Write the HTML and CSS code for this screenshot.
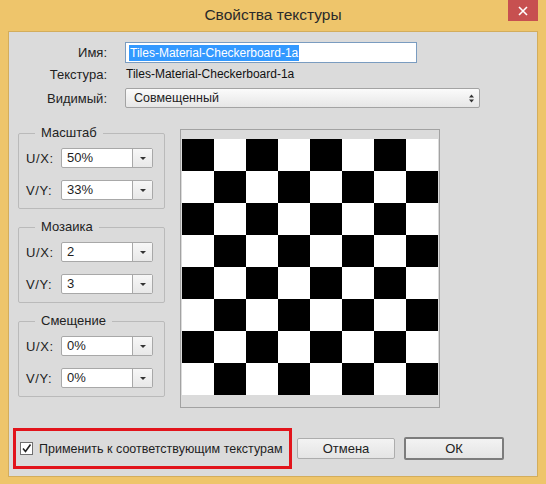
FILE: index.html
```html
<!DOCTYPE html>
<html lang="ru">
<head>
<meta charset="utf-8">
<title>Свойства текстуры</title>
<link rel="stylesheet" href="styles.css">
</head>
<body>
<div class="window">
  <div class="titlebar">
    <span class="title">Свойства текстуры</span>
    <div class="close"><svg width="10" height="10" viewBox="0 0 10 10"><path d="M1 1L9 9M9 1L1 9" stroke="#fff" stroke-width="1.6"/></svg></div>
  </div>
  <div class="client">
    <div class="props">
      <div class="prow r-name">
        <span class="plabel">Имя:</span>
        <div class="name-input"><span class="sel">Tiles-Material-Checkerboard-1a</span></div>
      </div>
      <div class="prow r-tex">
        <span class="plabel">Текстура:</span>
        <span class="pval">Tiles-Material-Checkerboard-1a</span>
      </div>
      <div class="prow r-vis">
        <span class="plabel">Видимый:</span>
        <div class="select"><span>Совмещенный</span>
          <svg width="5" height="9" viewBox="0 0 5 9"><path d="M0 3.5L2.5 0.5L5 3.5Z M0 5.5L2.5 8.5L5 5.5Z" fill="#333"/></svg>
        </div>
      </div>
    </div>
    <div class="middle">
      <div class="groups">
        <fieldset class="group">
          <legend>Масштаб</legend>
          <div class="crow"><span class="clabel">U/X:</span><div class="combo"><span class="cval">50%</span><span class="cbtn"><i></i></span></div></div>
          <div class="crow"><span class="clabel">V/Y:</span><div class="combo"><span class="cval">33%</span><span class="cbtn"><i></i></span></div></div>
        </fieldset>
        <fieldset class="group">
          <legend>Мозаика</legend>
          <div class="crow"><span class="clabel">U/X:</span><div class="combo"><span class="cval">2</span><span class="cbtn"><i></i></span></div></div>
          <div class="crow"><span class="clabel">V/Y:</span><div class="combo"><span class="cval">3</span><span class="cbtn"><i></i></span></div></div>
        </fieldset>
        <fieldset class="group">
          <legend>Смещение</legend>
          <div class="crow"><span class="clabel">U/X:</span><div class="combo"><span class="cval">0%</span><span class="cbtn"><i></i></span></div></div>
          <div class="crow"><span class="clabel">V/Y:</span><div class="combo"><span class="cval">0%</span><span class="cbtn"><i></i></span></div></div>
        </fieldset>
      </div>
      <div class="preview"><div class="board"></div></div>
    </div>
    <div class="footer">
      <div class="highlight">
        <span class="checkbox"><svg width="11" height="11" viewBox="0 0 11 11"><path d="M2 5.5L4.5 8.5L9.5 1.5" fill="none" stroke="#222" stroke-width="1.6"/></svg></span>
        <span class="cblabel">Применить к соответствующим текстурам</span>
      </div>
      <div class="btn cancel">Отмена</div>
      <div class="btn ok">ОК</div>
    </div>
  </div>
</div>
</body>
</html>
```

FILE: styles.css
```css
* { box-sizing: border-box; }
html, body { margin: 0; padding: 0; }
body {
  background: #eec56b;
  font-family: "Liberation Sans", Arial, sans-serif;
  font-size: 13px;
  color: #1e1e1e;
  white-space: nowrap;
}
.window {
  width: 546px;
  height: 484px;
  background: #eec56b;
  padding: 0 8px 7px 8px;
  display: flex;
  flex-direction: column;
}
.titlebar {
  position: relative;
  height: 31px;
  display: flex;
  align-items: center;
  justify-content: center;
}
.title {
  font-size: 15.5px;
  color: #2a2a2a;
  margin-top: -1px;
}
.close {
  position: absolute;
  right: 0;
  top: 0;
  width: 30px;
  height: 21px;
  background: #c75050;
  display: flex;
  align-items: center;
  justify-content: center;
}
.client {
  height: 446px;
  background: #dbdbdb;
  border: 1px solid #d3ad5c;
  display: flex;
  flex-direction: column;
}
.props {
  padding-top: 10px;
  display: flex;
  flex-direction: column;
}
.prow {
  display: flex;
  align-items: center;
}
.plabel {
  width: 98px;
  text-align: right;
  margin-right: 18px;
  color: #222;
}
.r-name { height: 21px; }
.r-tex { height: 22px; }
.r-vis { height: 20px; margin-top: 3px; }
.name-input {
  width: 292px;
  height: 21px;
  background: #fff;
  border: 1px solid #7a9cc0;
  display: flex;
  align-items: center;
  padding-left: 3px;
  font-size: 12px;
}
.sel {
  background: #3399ff;
  color: #fff;
  line-height: 16px;
  padding: 0 1px;
}
.pval { font-size: 12px; color: #111; padding-left: 1px; }
.select {
  width: 355px;
  height: 20px;
  border: 1px solid #a3a3a3;
  border-radius: 2px;
  background: linear-gradient(#fbfbfb, #e6e6e6);
  display: flex;
  align-items: center;
  justify-content: space-between;
  padding: 0 5px 0 8px;
  font-size: 12.5px;
}
.middle {
  margin-top: 17px;
  display: flex;
  align-items: flex-start;
}
.groups {
  margin-left: 9px;
  width: 147px;
  display: flex;
  flex-direction: column;
  gap: 10px;
}
.group {
  margin: 0;
  padding: 7px 10px 8px 7px;
  border: 1px solid #bababa;
  border-radius: 2px;
  display: flex;
  flex-direction: column;
  gap: 12px;
  min-width: 0;
}
.group legend {
  margin-left: 9px;
  padding: 0 6px;
  line-height: 16px;
  font-size: 13px;
  color: #222;
}
.crow {
  display: flex;
  align-items: center;
  height: 20px;
}
.clabel {
  width: 35px;
  letter-spacing: 0.6px;
  color: #222;
}
.combo {
  width: 92px;
  height: 20px;
  background: #fff;
  border: 1px solid #a8a8a8;
  border-radius: 2px;
  display: flex;
}
.cval {
  flex: 1;
  padding-left: 5px;
  line-height: 18px;
}
.cbtn {
  width: 20px;
  border-left: 1px solid #a8a8a8;
  background: linear-gradient(#f7f7f7, #e8e8e8);
  display: flex;
  align-items: center;
  justify-content: center;
}
.cbtn i {
  width: 0;
  height: 0;
  border-left: 3px solid transparent;
  border-right: 3px solid transparent;
  border-top: 3px solid #333;
}
.preview {
  margin-left: 15px;
  margin-top: 4px;
  width: 260px;
  height: 279px;
  border: 1px solid #a2a2a2;
  padding: 9px 0 0 1px;
}
.board {
  width: 256px;
  height: 256px;
  background: repeating-conic-gradient(#fff 0 25%, #000 0 50%) 0 0 / 64px 64px;
}
.footer {
  margin-top: 20px;
  display: flex;
  align-items: center;
  padding-left: 4px;
}
.highlight {
  width: 279px;
  height: 41px;
  border: 3px solid #e2141b;
  display: flex;
  align-items: center;
  padding-left: 4px;
}
.checkbox {
  width: 13px;
  height: 13px;
  border: 1px solid #6f6f6f;
  background: #fff;
  display: flex;
  align-items: center;
  justify-content: center;
  margin-right: 6px;
  flex-shrink: 0;
}
.cblabel { color: #1e1e1e; font-size: 12.5px; }
.btn {
  display: flex;
  align-items: center;
  justify-content: center;
  background: linear-gradient(#f3f3f3, #e4e4e4);
  border: 1px solid #adadad;
  border-radius: 2px;
  color: #222;
}
.cancel {
  margin-left: 5px;
  width: 98px;
  height: 21px;
}
.ok {
  margin-left: 9px;
  width: 100px;
  height: 23px;
  border: 2px solid #7c7c7c;
}
```
